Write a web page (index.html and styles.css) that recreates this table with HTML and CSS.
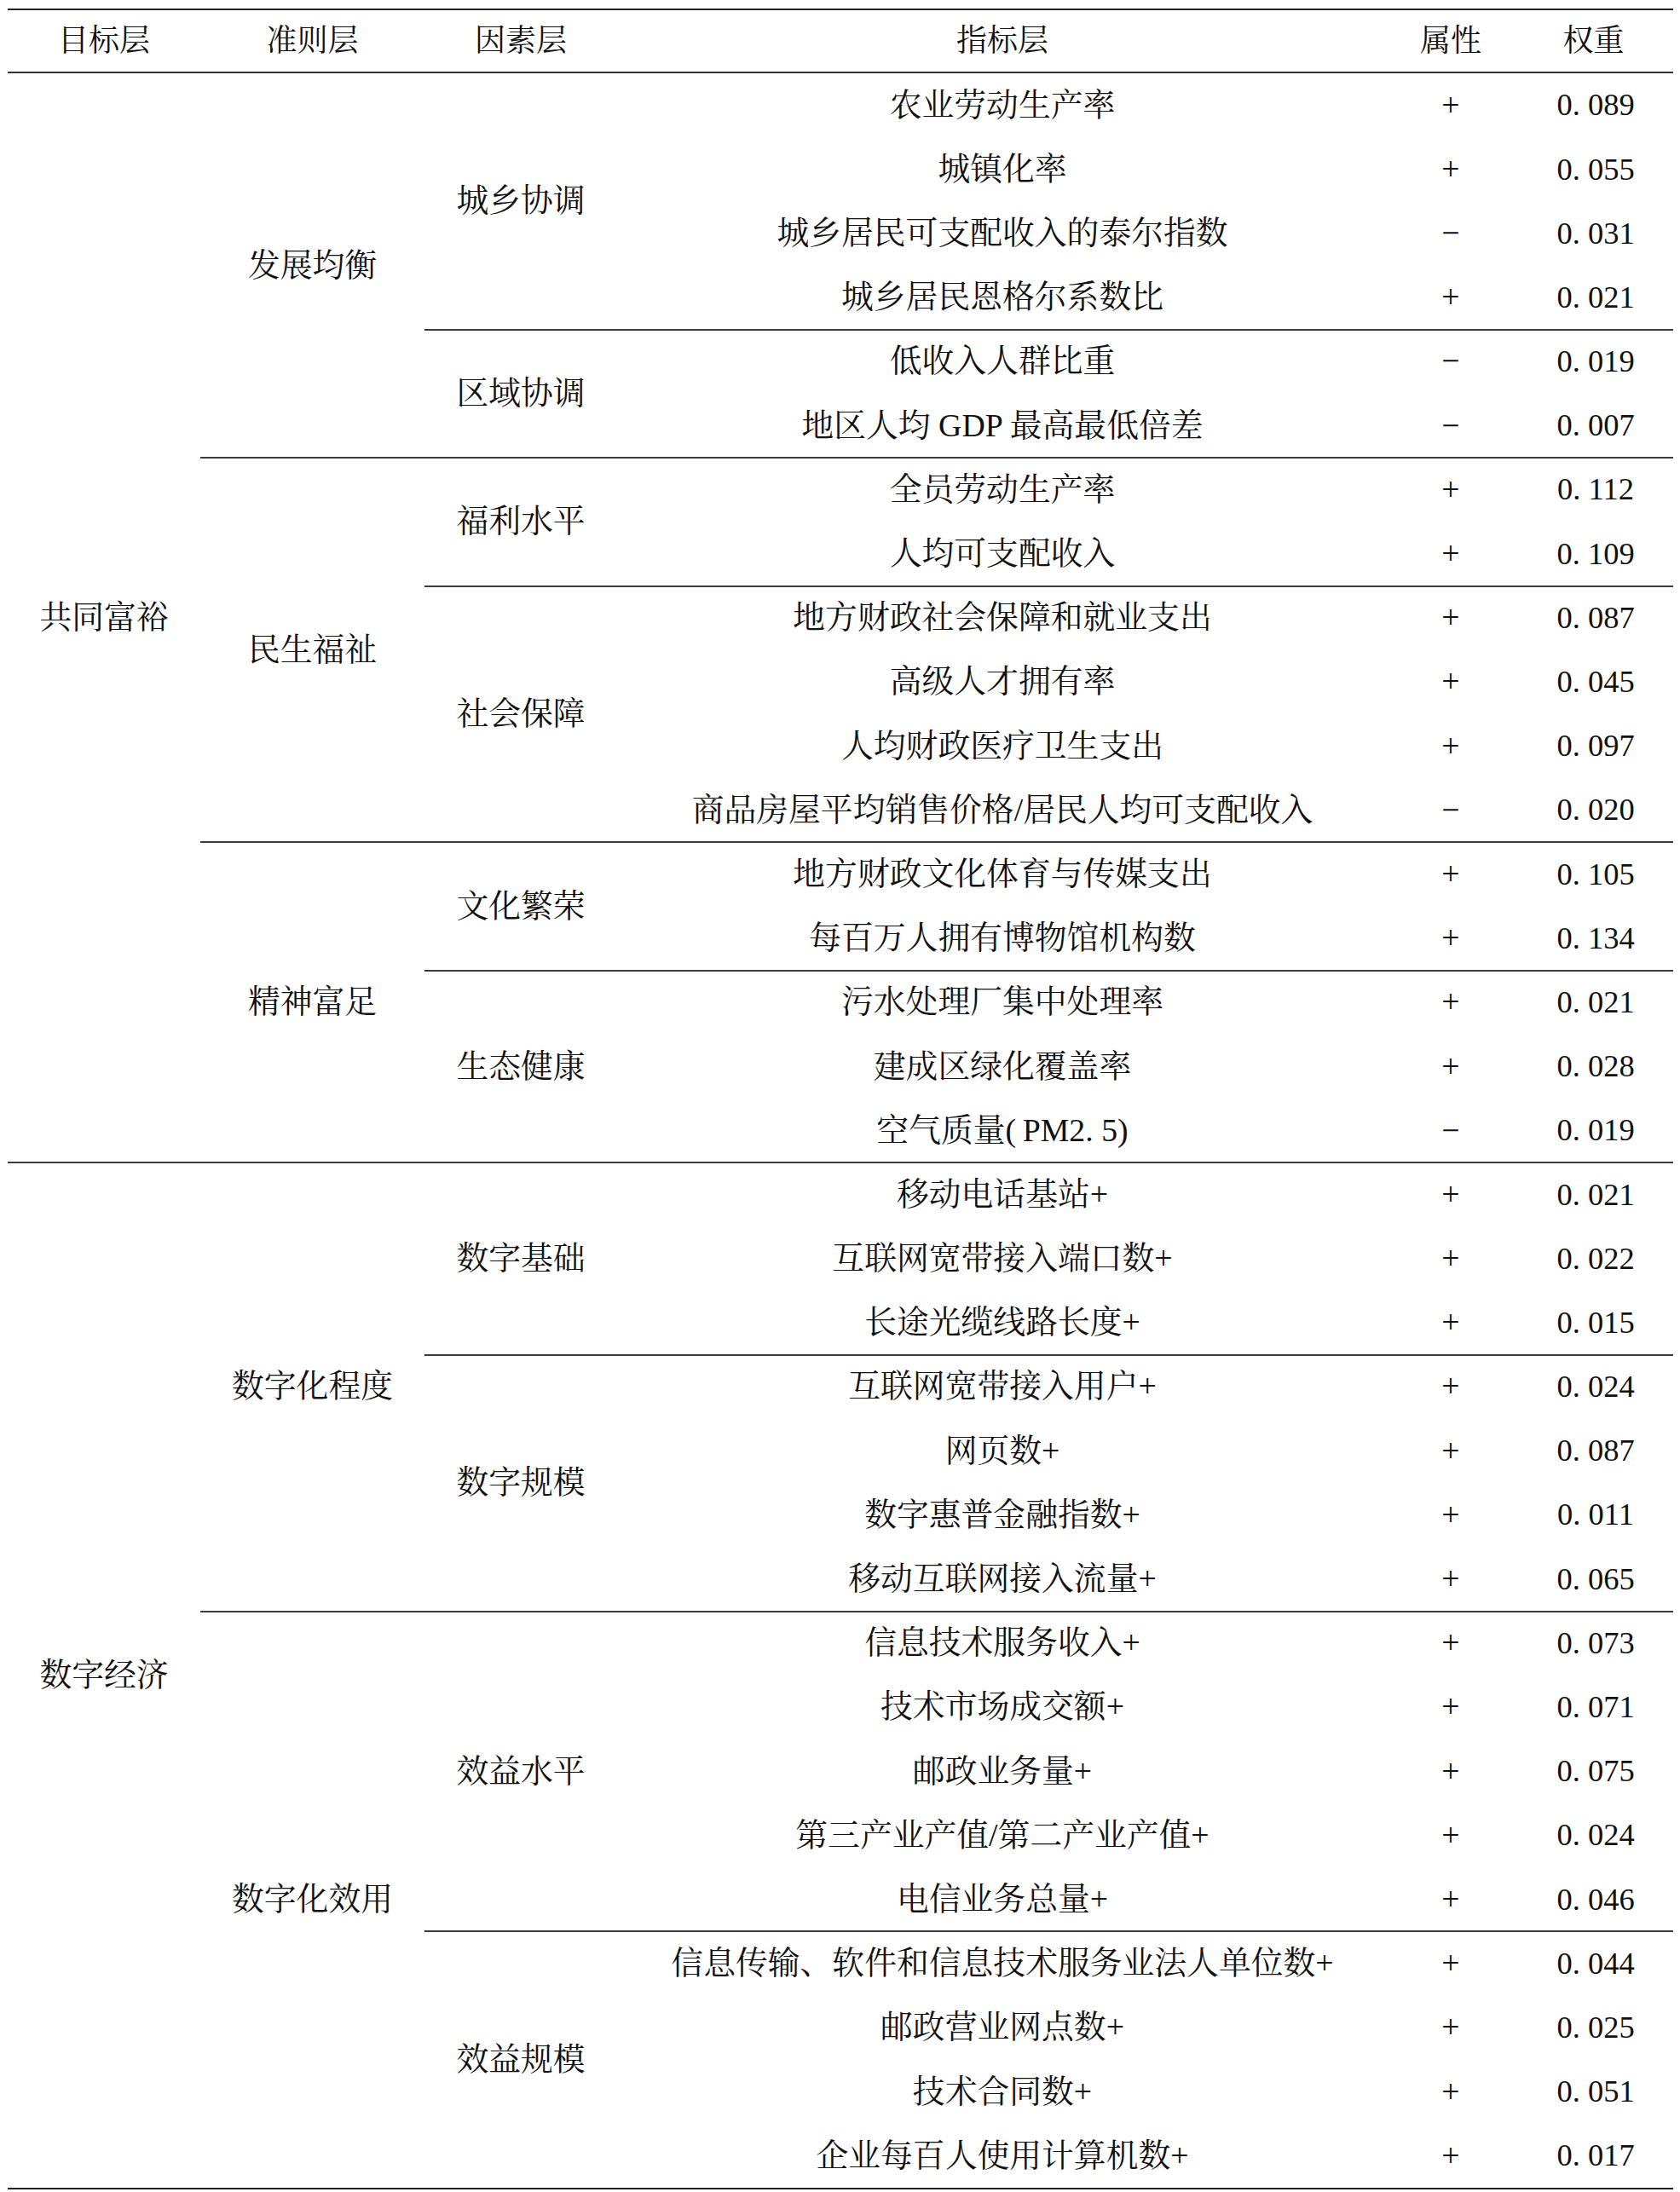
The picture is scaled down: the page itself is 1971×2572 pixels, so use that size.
FILE: index.html
```html
<!DOCTYPE html>
<html lang="zh-CN">
<head>
<meta charset="utf-8">
<title>指标体系</title>
<link rel="stylesheet" href="styles.css">
</head>
<body>
<div class="table">
  <div class="thead">
    <div class="c1">目标层</div>
    <div class="c2">准则层</div>
    <div class="c3">因素层</div>
    <div class="c4">指标层</div>
    <div class="c5">属性</div>
    <div class="c6">权重</div>
  </div>
  <div class="tbody">
    <div class="goal">
      <div class="label c1">共同富裕</div>
      <div class="list">
        <div class="crit">
          <div class="label c2">发展均衡</div>
          <div class="list">
            <div class="fac">
              <div class="label c3">城乡协调</div>
              <div class="list">
                <div class="ind"><div class="c4">农业劳动生产率</div><div class="c5">+</div><div class="c6">0. 089</div></div>
                <div class="ind"><div class="c4">城镇化率</div><div class="c5">+</div><div class="c6">0. 055</div></div>
                <div class="ind"><div class="c4">城乡居民可支配收入的泰尔指数</div><div class="c5">−</div><div class="c6">0. 031</div></div>
                <div class="ind"><div class="c4">城乡居民恩格尔系数比</div><div class="c5">+</div><div class="c6">0. 021</div></div>
              </div>
            </div>
            <div class="fac">
              <div class="label c3">区域协调</div>
              <div class="list">
                <div class="ind"><div class="c4">低收入人群比重</div><div class="c5">−</div><div class="c6">0. 019</div></div>
                <div class="ind"><div class="c4">地区人均 GDP 最高最低倍差</div><div class="c5">−</div><div class="c6">0. 007</div></div>
              </div>
            </div>
          </div>
        </div>
        <div class="crit">
          <div class="label c2">民生福祉</div>
          <div class="list">
            <div class="fac">
              <div class="label c3">福利水平</div>
              <div class="list">
                <div class="ind"><div class="c4">全员劳动生产率</div><div class="c5">+</div><div class="c6">0. 112</div></div>
                <div class="ind"><div class="c4">人均可支配收入</div><div class="c5">+</div><div class="c6">0. 109</div></div>
              </div>
            </div>
            <div class="fac">
              <div class="label c3">社会保障</div>
              <div class="list">
                <div class="ind"><div class="c4">地方财政社会保障和就业支出</div><div class="c5">+</div><div class="c6">0. 087</div></div>
                <div class="ind"><div class="c4">高级人才拥有率</div><div class="c5">+</div><div class="c6">0. 045</div></div>
                <div class="ind"><div class="c4">人均财政医疗卫生支出</div><div class="c5">+</div><div class="c6">0. 097</div></div>
                <div class="ind"><div class="c4">商品房屋平均销售价格/居民人均可支配收入</div><div class="c5">−</div><div class="c6">0. 020</div></div>
              </div>
            </div>
          </div>
        </div>
        <div class="crit">
          <div class="label c2">精神富足</div>
          <div class="list">
            <div class="fac">
              <div class="label c3">文化繁荣</div>
              <div class="list">
                <div class="ind"><div class="c4">地方财政文化体育与传媒支出</div><div class="c5">+</div><div class="c6">0. 105</div></div>
                <div class="ind"><div class="c4">每百万人拥有博物馆机构数</div><div class="c5">+</div><div class="c6">0. 134</div></div>
              </div>
            </div>
            <div class="fac">
              <div class="label c3">生态健康</div>
              <div class="list">
                <div class="ind"><div class="c4">污水处理厂集中处理率</div><div class="c5">+</div><div class="c6">0. 021</div></div>
                <div class="ind"><div class="c4">建成区绿化覆盖率</div><div class="c5">+</div><div class="c6">0. 028</div></div>
                <div class="ind"><div class="c4">空气质量(&#8201;PM2. 5)</div><div class="c5">−</div><div class="c6">0. 019</div></div>
              </div>
            </div>
          </div>
        </div>
      </div>
    </div>
    <div class="goal">
      <div class="label c1">数字经济</div>
      <div class="list">
        <div class="crit">
          <div class="label c2">数字化程度</div>
          <div class="list">
            <div class="fac">
              <div class="label c3">数字基础</div>
              <div class="list">
                <div class="ind"><div class="c4">移动电话基站+</div><div class="c5">+</div><div class="c6">0. 021</div></div>
                <div class="ind"><div class="c4">互联网宽带接入端口数+</div><div class="c5">+</div><div class="c6">0. 022</div></div>
                <div class="ind"><div class="c4">长途光缆线路长度+</div><div class="c5">+</div><div class="c6">0. 015</div></div>
              </div>
            </div>
            <div class="fac">
              <div class="label c3">数字规模</div>
              <div class="list">
                <div class="ind"><div class="c4">互联网宽带接入用户+</div><div class="c5">+</div><div class="c6">0. 024</div></div>
                <div class="ind"><div class="c4">网页数+</div><div class="c5">+</div><div class="c6">0. 087</div></div>
                <div class="ind"><div class="c4">数字惠普金融指数+</div><div class="c5">+</div><div class="c6">0. 011</div></div>
                <div class="ind"><div class="c4">移动互联网接入流量+</div><div class="c5">+</div><div class="c6">0. 065</div></div>
              </div>
            </div>
          </div>
        </div>
        <div class="crit">
          <div class="label c2">数字化效用</div>
          <div class="list">
            <div class="fac">
              <div class="label c3">效益水平</div>
              <div class="list">
                <div class="ind"><div class="c4">信息技术服务收入+</div><div class="c5">+</div><div class="c6">0. 073</div></div>
                <div class="ind"><div class="c4">技术市场成交额+</div><div class="c5">+</div><div class="c6">0. 071</div></div>
                <div class="ind"><div class="c4">邮政业务量+</div><div class="c5">+</div><div class="c6">0. 075</div></div>
                <div class="ind"><div class="c4">第三产业产值/第二产业产值+</div><div class="c5">+</div><div class="c6">0. 024</div></div>
                <div class="ind"><div class="c4">电信业务总量+</div><div class="c5">+</div><div class="c6">0. 046</div></div>
              </div>
            </div>
            <div class="fac">
              <div class="label c3">效益规模</div>
              <div class="list">
                <div class="ind"><div class="c4">信息传输、软件和信息技术服务业法人单位数+</div><div class="c5">+</div><div class="c6">0. 044</div></div>
                <div class="ind"><div class="c4">邮政营业网点数+</div><div class="c5">+</div><div class="c6">0. 025</div></div>
                <div class="ind"><div class="c4">技术合同数+</div><div class="c5">+</div><div class="c6">0. 051</div></div>
                <div class="ind"><div class="c4">企业每百人使用计算机数+</div><div class="c5">+</div><div class="c6">0. 017</div></div>
              </div>
            </div>
          </div>
        </div>
      </div>
    </div>
  </div>
</div>
</body>
</html>
```
FILE: styles.css
```css
html, body {
  margin: 0;
  padding: 0;
  background: #fff;
}
body {
  font-family: "Liberation Serif", "Noto Serif CJK SC", "Noto Sans CJK SC", serif;
  color: #111;
  font-size: 37.8px;
}
.table {
  margin: 10px 0 0 9px;
  width: 1954px;
  border-top: 2px solid #222;
  border-bottom: 2px solid #222;
}
.thead {
  display: flex;
  height: 72px;
  align-items: center;
  border-bottom: 2px solid #333;
  font-size: 36px;
}
.thead > div {
  text-align: center;
  line-height: 1;
}
.c1 { flex: 0 0 226px; width: 226px; }
.c2 { flex: 0 0 263px; width: 263px; }
.c3 { flex: 0 0 226px; width: 226px; }
.c4 { flex: 0 0 904px; width: 904px; }
.c5 { flex: 0 0 148px; width: 148px; }
.c6 { flex: 0 0 187px; width: 187px; }
.ind > .c6 {
  font-size: 36.5px;
  padding-left: 5px;
  box-sizing: border-box;
}
.goal, .crit, .fac {
  display: flex;
}
.list {
  display: flex;
  flex-direction: column;
  flex: 1 1 auto;
}
.goal + .goal,
.crit + .crit,
.fac + .fac {
  box-shadow: 0 -1px 0 #3c3c3c, inset 0 1px 0 #3c3c3c;
}
.label {
  display: flex;
  align-items: center;
  justify-content: center;
  line-height: 1;
}
.ind {
  display: flex;
  align-items: center;
  height: 75.2px;
}
.ind > div {
  text-align: center;
  line-height: 1;
  white-space: nowrap;
}
```
